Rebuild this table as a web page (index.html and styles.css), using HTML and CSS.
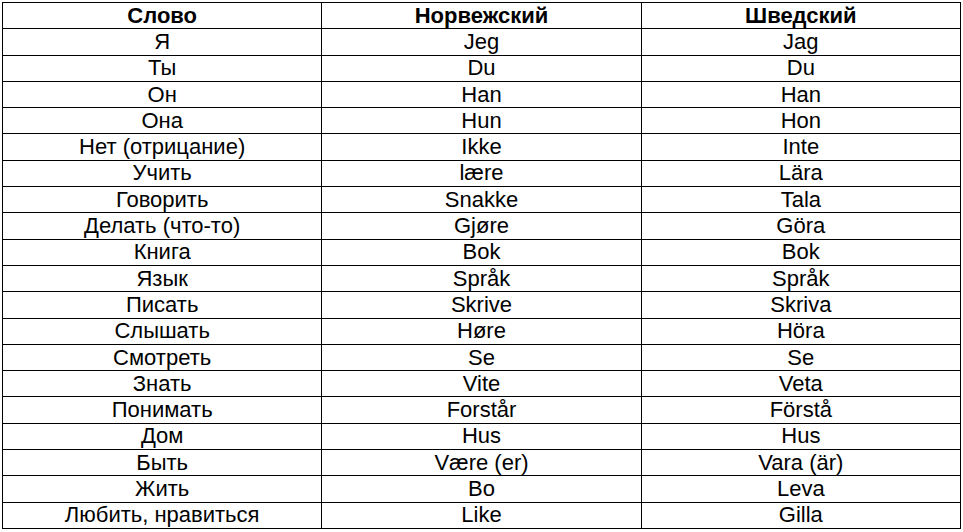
FILE: index.html
```html
<!DOCTYPE html>
<html lang="ru">
<head>
<meta charset="utf-8">
<link rel="stylesheet" href="styles.css">
</head>
<body>
<table class="words">
<thead>
<tr><th>Слово</th><th>Норвежский</th><th>Шведский</th></tr>
</thead>
<tbody>
<tr><td>Я</td><td>Jeg</td><td>Jag</td></tr>
<tr><td>Ты</td><td>Du</td><td>Du</td></tr>
<tr><td>Он</td><td>Han</td><td>Han</td></tr>
<tr><td>Она</td><td>Hun</td><td>Hon</td></tr>
<tr><td>Нет (отрицание)</td><td>Ikke</td><td>Inte</td></tr>
<tr><td>Учить</td><td>lære</td><td>Lära</td></tr>
<tr><td>Говорить</td><td>Snakke</td><td>Tala</td></tr>
<tr><td>Делать (что-то)</td><td>Gjøre</td><td>Göra</td></tr>
<tr><td>Книга</td><td>Bok</td><td>Bok</td></tr>
<tr><td>Язык</td><td>Språk</td><td>Språk</td></tr>
<tr><td>Писать</td><td>Skrive</td><td>Skriva</td></tr>
<tr><td>Слышать</td><td>Høre</td><td>Höra</td></tr>
<tr><td>Смотреть</td><td>Se</td><td>Se</td></tr>
<tr><td>Знать</td><td>Vite</td><td>Veta</td></tr>
<tr><td>Понимать</td><td>Forstår</td><td>Förstå</td></tr>
<tr><td>Дом</td><td>Hus</td><td>Hus</td></tr>
<tr><td>Быть</td><td>Være (er)</td><td>Vara (är)</td></tr>
<tr><td>Жить</td><td>Bo</td><td>Leva</td></tr>
<tr><td>Любить, нравиться</td><td>Like</td><td>Gilla</td></tr>
</tbody>
</table>
</body>
</html>
```
FILE: styles.css
```css
html, body {
  margin: 0;
  padding: 0;
  background: #ffffff;
}
body {
  padding: 2px 0 0 2px;
  font-family: "Liberation Sans", Arial, sans-serif;
  color: #000;
}
.words {
  border-collapse: collapse;
  width: 959px;
  table-layout: fixed;
  font-size: 22px;
}
.words th,
.words td {
  border: 1px solid #000;
  height: 25.3px;
  padding: 0;
  text-align: center;
  vertical-align: middle;
  line-height: 20px;
  width: 33.33%;
}
.words th {
  font-weight: bold;
}
```
